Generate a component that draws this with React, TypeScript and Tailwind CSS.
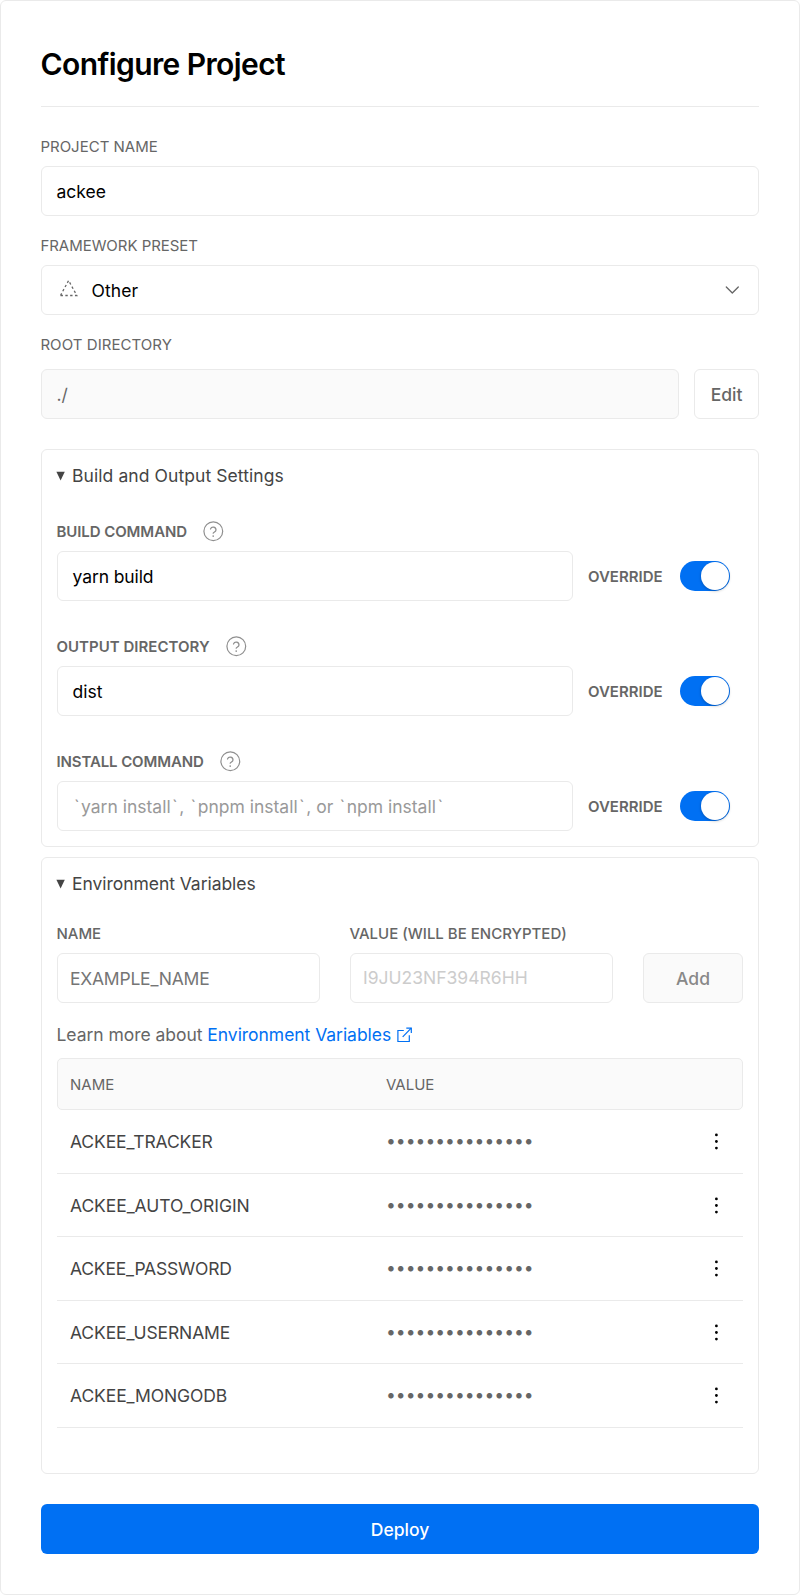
import type { ReactNode } from 'react';

const label = 'text-[15px] leading-[18px] text-[#666] uppercase whitespace-nowrap';
const field =
  'flex h-[50px] items-center rounded-[6px] border border-[#eaeaea] bg-white pt-[2px] text-[17.5px] leading-[22px] text-black whitespace-pre';

function Toggle() {
  return (
    <div className="flex h-[30px] w-[50px] items-center justify-end rounded-full bg-[#0070f3] pr-px">
      <div className="size-7 rounded-full bg-white shadow-[0_1px_3px_rgba(0,0,0,0.25)]" />
    </div>
  );
}

function Help() {
  return (
    <svg width="22" height="22" viewBox="0 0 22 22" fill="none" stroke="#8f8f8f" strokeLinecap="round" strokeLinejoin="round">
      <circle cx="11.3" cy="11.3" r="9.4" strokeWidth="1.2" />
      <path d="M8.5 9a2.85 2.85 0 0 1 5.5.9c0 1.9-2.8 2.4-2.8 3.3" strokeWidth="1.25" />
      <circle cx="11.2" cy="16.1" r="0.85" fill="#8f8f8f" stroke="none" />
    </svg>
  );
}

function Setting({ name, tracking = '', children }: { name: string; tracking?: string; children: ReactNode }) {
  return (
    <div>
      <div className="flex h-[22px] items-center gap-[15px]">
        <span className={`${label} ${tracking} -ml-[0.6px] pt-px font-semibold`}>{name}</span>
        <Help />
      </div>
      <div className="mt-[9px] flex items-center">
        <div className={`${field} w-[516px] px-[14.5px]`}>{children}</div>
        <span className={`${label} ml-[15px] w-[92px] pt-[2px] font-semibold`}>Override</span>
        <Toggle />
      </div>
    </div>
  );
}

function Tick() {
  return <span className="px-[1.45px]">`</span>;
}

function Summary({ tracking, children }: { tracking: string; children: ReactNode }) {
  return (
    <div className={`flex h-6 items-center text-[17.5px] leading-[22px] text-[#444] ${tracking}`}>
      <svg width="9" height="10" viewBox="0 0 9 10" className="mr-[7px] -ml-px">
        <path d="M0.4 0.7H8.8L4.6 9.5Z" fill="#444" />
      </svg>
      {children}
    </div>
  );
}

const rows = [
  { name: 'ACKEE_TRACKER', layout: 'h-16', menu: 'mb-0', tracking: 'tracking-[-0.13px]' },
  { name: 'ACKEE_AUTO_ORIGIN', layout: 'h-[63px] pt-[2px]', menu: 'mb-px', tracking: 'tracking-[-0.07px]' },
  { name: 'ACKEE_PASSWORD', layout: 'h-16', menu: 'mb-0', tracking: 'tracking-[-0.2px]' },
  { name: 'ACKEE_USERNAME', layout: 'h-[63px] pt-[2px]', menu: 'mb-px', tracking: 'tracking-[-0.13px]' },
  { name: 'ACKEE_MONGODB', layout: 'h-16', menu: 'mb-0', tracking: 'tracking-[-0.1px]' },
];

export default function App() {
  return (
    <div className="h-[1595px] w-[800px] rounded-[6px] border border-[#eaeaea] bg-white px-10 font-['Inter',sans-serif]">
      <div className="flex h-[106px] items-center border-b border-[#eaeaea] pt-[21px]">
        <h1 className="-ml-[0.4px] text-[30px] leading-9 font-semibold tracking-[-0.6px] text-black">Configure Project</h1>
      </div>

      <div className="pt-[31px]">
        <div className={`${label} -ml-[0.6px]`}>Project Name</div>
        <div className={`${field} mt-[10px] px-[14.5px]`}>ackee</div>
      </div>

      <div className="pt-[21px]">
        <div className={`${label} -ml-[0.6px] tracking-[-0.04px]`}>Framework Preset</div>
        <div className={`${field} mt-[10px] pr-[18px] pl-[17px]`}>
          <svg width="20" height="20" viewBox="0 0 20 20" fill="none" stroke="#666" strokeWidth="1.3" strokeDasharray="2.4 2.4" className="mb-[5px]">
            <path d="M1.5 16.5L9.6 1.5L17.8 16.5Z" />
          </svg>
          <span className="ml-[12.5px] flex-1 tracking-[0.1px]">Other</span>
          <svg width="16" height="10" viewBox="0 0 16 10" fill="none" stroke="#666" strokeWidth="1.3" strokeLinecap="round" strokeLinejoin="round" className="mb-[2px]">
            <path d="M2.3 2L8.3 8L14.3 2" />
          </svg>
        </div>
      </div>

      <div className="pt-[21px]">
        <div className={`${label} -ml-[0.6px] tracking-[0.06px]`}>Root Directory</div>
        <div className="mt-[15px] flex gap-[15px]">
          <div className="flex h-[50px] flex-1 items-center rounded-[6px] border border-[#eaeaea] bg-[#fafafa] px-[14.5px] pt-[2px] text-[17.5px] text-[#666]">./</div>
          <div className="flex h-[50px] w-[65px] items-center justify-center rounded-[6px] border border-[#eaeaea] pt-[2px] text-[17.5px] font-medium text-[#666]">Edit</div>
        </div>
      </div>

      <section className="mt-[30px] h-[398px] rounded-[6px] border border-[#eaeaea] px-[15px] pt-[14px]">
        <Summary tracking="tracking-[0.08px]">Build and Output Settings</Summary>
        <div className="mt-[32px] flex flex-col gap-[34px]">
          <Setting name="Build Command" tracking="tracking-[-0.07px]">
            <span className="tracking-[-0.1px]">yarn build</span>
          </Setting>
          <Setting name="Output Directory" tracking="tracking-[0.03px]">dist</Setting>
          <Setting name="Install Command" tracking="tracking-[-0.1px]">
            <span className="text-[#999]">
              <Tick />yarn install<Tick />, <Tick />pnpm install<Tick />, or <Tick />npm install<Tick />
            </span>
          </Setting>
        </div>
      </section>

      <section className="mt-[10px] h-[617px] rounded-[6px] border border-[#eaeaea] px-[15px] pt-[14px]">
        <Summary tracking="tracking-[-0.05px]">Environment Variables</Summary>
        <div className="mt-[29px] flex items-end">
          <div className="mr-[30px] w-[263px]">
            <div className={`${label} -ml-[0.6px] font-medium`}>Name</div>
            <div className={`${field} mt-[10px] px-3`}>
              <span className="tracking-[-0.22px] text-[#757575]">EXAMPLE_NAME</span>
            </div>
          </div>
          <div className="mr-[30px] w-[263px]">
            <div className={`${label} -ml-[0.6px] font-medium`}>Value (Will be encrypted)</div>
            <div className={`${field} mt-[10px] px-3 pb-[2px]`}>
              <span className="text-[#ccc]">I9JU23NF394R6HH</span>
            </div>
          </div>
          <div className="flex h-[50px] w-[100px] items-center justify-center rounded-[6px] border border-[#eaeaea] bg-[#fafafa] pt-[2px] text-[17.5px] font-medium text-[#888]">Add</div>
        </div>

        <div className="mt-5 -ml-[0.5px] flex h-6 items-center text-[17.5px] leading-6 tracking-[-0.04px] whitespace-pre text-[#666]">
          {'Learn more about '}
          <span className="text-[#0070f3]">Environment Variables</span>
          <svg width="16" height="16" viewBox="0 0 16 16" fill="none" stroke="#0070f3" strokeWidth="1.2" className="ml-[6px]">
            <path d="M6.8 3.5H0.9V14.5H12.3V8.2" />
            <path d="M9.3 1.1H14.3V6.1" />
            <path d="M14.2 1.2L5.7 9.8" />
          </svg>
        </div>

        <div className="mt-[11px]">
          <div className="flex h-[52px] items-center rounded-[5px] border border-[#eaeaea] bg-[#fafafa] pt-[2px] pl-3">
            <span className={`${label} w-[316px]`}>Name</span>
            <span className={label}>Value</span>
          </div>
          {rows.map((row) => (
            <div key={row.name} className={`flex ${row.layout} items-center border-b border-[#eaeaea] pr-6 pl-[13px] text-[17.5px] leading-[22px]`}>
              <span className={`w-[316px] text-[#444] ${row.tracking}`}>{row.name}</span>
              <span className="flex-1 pb-[2px] text-[#666]">•••••••••••••••</span>
              <svg width="5" height="17" viewBox="0 0 5 17" fill="#000" className={row.menu}>
                <circle cx="2.4" cy="1.9" r="1.4" />
                <circle cx="2.4" cy="8.5" r="1.4" />
                <circle cx="2.4" cy="15.1" r="1.4" />
              </svg>
            </div>
          ))}
        </div>
      </section>

      <div className="mt-[30px] flex h-[50px] items-center justify-center rounded-[6px] bg-[#0070f3] pt-[2px] text-[17.5px] font-medium text-white">Deploy</div>
    </div>
  );
}
